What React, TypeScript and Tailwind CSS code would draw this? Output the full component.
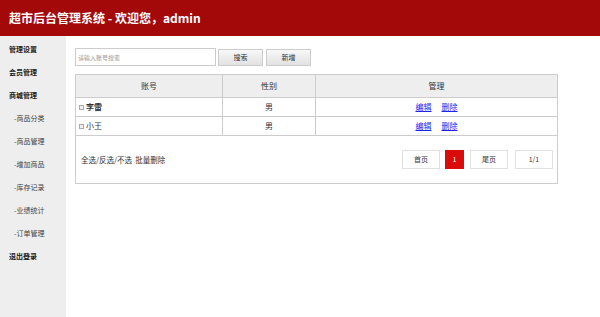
import React from "react";

const font = { fontFamily: '"Noto Sans CJK SC", "Liberation Sans", sans-serif' };

export default function App() {
  const side = [
    { t: "管理设置", b: true },
    { t: "会员管理", b: true },
    { t: "商城管理", b: true },
    { t: "-商品分类" },
    { t: "-商品管理" },
    { t: "-增加商品" },
    { t: "-库存记录" },
    { t: "-业绩统计" },
    { t: "-订单管理" },
    { t: "退出登录", b: true },
  ];
  const rows = [
    { n: "李雷", b: true },
    { n: "小王", b: false },
  ];
  return (
    <div className="w-[600px] h-[317px] flex flex-col bg-white text-[#333]" style={font}>
      <div className="h-[36px] bg-[#a30909] flex items-center pl-[9px] text-white font-bold text-[12px] shrink-0">
        超市后台管理系统 - 欢迎您，admin
      </div>
      <div className="flex flex-1">
        <div className="w-[66px] bg-[#eeeeee] pt-[2px] flex flex-col">
          {side.map((s) => (
            <div
              key={s.t}
              className={`h-[23px] flex items-center text-[7px] ${s.b ? "font-bold pl-[9px] text-[#222]" : "pl-[14px] text-[#444]"}`}
            >
              {s.t}
            </div>
          ))}
        </div>
        <div className="flex-1 pl-[9px] pt-[12px]">
          <div className="flex items-center gap-[2px]">
            <div className="w-[141px] h-[18px] border border-[#ccc] flex items-center pl-[2px] text-[6px] text-[#999]">
              请输入账号搜索
            </div>
            <div className="w-[45px] h-[17px] border border-[#ccc] bg-gradient-to-b from-[#f8f8f8] to-[#e2e2e2] flex items-center justify-center text-[7px] text-[#333]">
              搜索
            </div>
            <div className="w-[45px] h-[17px] ml-[1px] border border-[#ccc] bg-gradient-to-b from-[#f8f8f8] to-[#e2e2e2] flex items-center justify-center text-[7px] text-[#333]">
              新增
            </div>
          </div>
          <div className="mt-[8px] w-[483px] border border-[#ccc] text-[8px]">
            <div className="flex h-[23px] bg-[#eeeeee] border-b border-[#ccc]">
              <div className="w-[147px] border-r border-[#ccc] flex items-center justify-center">账号</div>
              <div className="w-[93px] border-r border-[#ccc] flex items-center justify-center">性别</div>
              <div className="flex-1 flex items-center justify-center">管理</div>
            </div>
            {rows.map((r) => (
              <div key={r.n} className="flex h-[19px] border-b border-[#ccc]">
                <div className="w-[147px] border-r border-[#ccc] flex items-center pl-[3px] gap-[2px]">
                  <span className="inline-block w-[5px] h-[5px] border border-[#aaa] bg-[#f0f0f0]" />
                  <span className={r.b ? "font-bold" : ""}>{r.n}</span>
                </div>
                <div className="w-[93px] border-r border-[#ccc] flex items-center justify-center">男</div>
                <div className="flex-1 flex items-center justify-center gap-[10px] text-[#2222ee]">
                  <span className="underline">编辑</span>
                  <span className="underline">删除</span>
                </div>
              </div>
            ))}
            <div className="h-[47px] flex items-center justify-between pl-[5px] pr-[4px]">
              <div className="text-[7.5px] text-[#333]">全选/反选/不选&nbsp;&nbsp;批量删除</div>
              <div className="flex items-center text-[7px]">
                <div className="w-[38px] h-[19px] border border-[#e0e0e0] flex items-center justify-center">首页</div>
                <div className="w-[19px] h-[19px] ml-[5px] bg-[#d90b0b] text-white flex items-center justify-center">1</div>
                <div className="w-[38px] h-[19px] ml-[6px] border border-[#e0e0e0] flex items-center justify-center">尾页</div>
                <div className="w-[38px] h-[19px] ml-[7px] border border-[#e0e0e0] flex items-center justify-center">1/1</div>
              </div>
            </div>
          </div>
        </div>
      </div>
    </div>
  );
}
